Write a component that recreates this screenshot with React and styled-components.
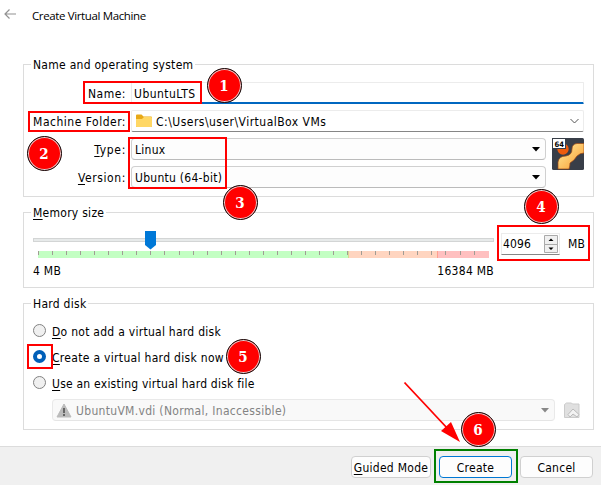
import React from "react";
import styled, { createGlobalStyle } from "styled-components";

const Global = createGlobalStyle`
  * { box-sizing: border-box; }
  body { margin: 0; background: #fff; overflow: hidden; }
`;
const Window = styled.main`
  position: relative; width: 601px; height: 485px; display: flex; flex-direction: column;
  background: #fff; color: #000; font: 12px/16px "DejaVu Sans Condensed", "DejaVu Sans", sans-serif; font-stretch: condensed;
`;
const Label = styled.span`
  display: inline-block; white-space: nowrap; line-height: 16px; padding-top: 1px;
  letter-spacing: ${p => p.$ls ?? 0.27}px;
  &::first-letter { text-decoration: ${p => (p.$key ? "underline" : "none")}; text-underline-offset: 2px; }
`;
const Header = styled.header`
  height: 64px; padding: 6px 0 0 4px; display: flex; align-items: flex-start; gap: 16px; flex: none;
  font: 11.5px/18px "Open Sans", sans-serif; svg { display: block; margin-top: 2px; }
`;
const Title = styled.span`letter-spacing: -0.37px; margin-top: 1px; white-space: nowrap;`;
const Group = styled.section`
  width: 571px; height: ${p => p.$h}px; margin: 0 0 ${p => p.$mb}px 23px; border: 1px solid #dcdcdc;
  display: flex; flex-direction: column; flex: none;
`;
const Legend = styled.h2`
  margin: -9px auto 0 7px; padding: 0 2px; height: 18px; font: inherit; background: #fff; flex: none;
`;
const FormGrid = styled.div`
  display: grid; grid-template-columns: 103px 415px 33px; column-gap: 5px; row-gap: 6px;
  grid-template-rows: repeat(4, 22px); margin: 8px 0 0 -1px;
`;
const FieldLabel = styled.div`text-align: right; padding: 3px 0 0; white-space: nowrap;`;
const Input = styled.div`
  grid-column: 2 / 4; border: 1px solid #ececec; border-bottom: 2px solid #0067c0; border-radius: 1px;
  padding: 2px 0 0 2px; height: 22px;
`;
const FolderBox = styled.div`
  grid-column: 2 / 4; border: 1px solid #ececec; border-bottom-color: #868686; border-radius: 2px;
  display: flex; align-items: center; padding: 0 4px; gap: 4px;
  svg:last-child { margin-left: auto; }
`;
const Combo = styled.div`
  height: 22px; width: ${p => p.$w}px; flex: none; display: flex; align-items: center; justify-content: space-between;
  border: 1px solid ${p => (p.$off ? "#e9e9e9" : "#d0d0d0")}; border-bottom-color: ${p => (p.$off ? "#e5e5e5" : "#bbb")}; border-radius: 4px;
  background: ${p => (p.$off ? "#f9f9f9" : "#fdfdfd")}; color: ${p => (p.$off ? "#838383" : "#000")};
  padding: 0 5px 0 3px;
`;
const Cluster = styled.div`display: flex; align-items: center; gap: 4px;`;
const OsIcon = styled.div`grid-column: 3; grid-row: 3 / 5; padding-left: 1px; svg { display: block; }`;
const MemoryRow = styled.div`display: flex; margin: 8px 0 0 9px;`;
const SliderColumn = styled.div`width: 461px; display: flex; flex-direction: column;`;
const Range = styled.div`display: flex; justify-content: space-between; margin-top: -2px;`;
const Spin = styled.div`
  margin: 3px 0 0 7px; width: 59px; height: 22px; border: 1px solid #ececec; border-bottom-color: #868686;
  display: flex; justify-content: space-between; padding: 1px 0 0 1px; line-height: 20px;
  svg { display: block; }
`;
const Unit = styled.div`margin: 5px 0 0 8px;`;
const RadioList = styled.div`display: flex; flex-direction: column; margin: 5px 0 0 9px;`;
const RadioRow = styled.div`display: flex; align-items: center; gap: 6px; height: 26px;`;
const Radio = styled.i`
  width: 13px; height: 13px; border-radius: 50%; flex: none; margin-top: -1px;
  border: ${p => (p.$on ? "4px solid #005fb8" : "1px solid #828282")}; background: ${p => (p.$on ? "#fff" : "#f0f0f0")};
`;
const DiskRow = styled.div`display: flex; align-items: center; gap: 8px; margin: 3px 0 0 28px;`;
const Footer = styled.footer`
  flex: 1; background: #f0f0f0; border-top: 1px solid #dcdcdc; display: flex; justify-content: flex-end;
  padding: 9px 8px 0 0; gap: 8px;
`;
const Button = styled.button`
  width: ${p => p.$w}px; height: 22px; padding: 0; font: inherit; color: #000; background: #fdfdfd; border-radius: 4px;
  border: 1px solid ${p => (p.$main ? "#0078d4" : "#d0d0d0")};
`;
const Marker = styled.div`
  position: absolute; left: ${p => p.$x}px; top: ${p => p.$y}px; width: ${p => p.$w}px; height: ${p => p.$h}px;
  border: 2px solid ${p => p.$c || "#f00"};
`;
const Badge = styled.div`
  position: absolute; left: ${p => p.$x - 17.5}px; top: ${p => p.$y - 17.5}px; width: 35px; height: 35px;
  border: 1px solid #111; border-radius: 50%; background: #f00; box-shadow: inset 0 0 0 1px #e8d0d0;
  color: #fff; font: bold 15px/34px "DejaVu Serif", serif; font-stretch: condensed; text-align: center;
`;
const Arrow = styled.svg`position: absolute; left: 400px; top: 378px;`;

const Caret = ({ c = "#000" }) => (
  <svg width="8" height="5"><path d="M0 0h8L4 4.5z" fill={c} /></svg>
);
const Text = ({ s, ls, k }) => <Label $ls={ls} $key={k}>{s}</Label>;

const ticks = Array.from({ length: 32 }, (_, i) => 5 + Math.round(i * 14.05));
const Slider = () => (
  <svg width="461" height="34" shapeRendering="crispEdges">
    <rect x="0.5" y="8.5" width="460" height="3" fill="#e7eaea" stroke="#d3d5d5" />
    <rect x="5" y="21" width="310" height="7" fill="#c3ffc3" />
    <rect x="315" y="21" width="89" height="7" fill="#ffd5c0" />
    <rect x="404" y="21" width="52" height="7" fill="#ffc0c0" />
    <rect x="315" y="21" width="1" height="7" fill="#d8d890" />
    <rect x="404" y="21" width="1" height="7" fill="#ffa090" />
    {ticks.map(x => <rect key={x} x={x} y="21" width="1" height="4" fill="#a09c94" />)}
    <path d="M112 1h11v14l-5.500 4.500-5.500-4.500z" fill="#0078d7" shapeRendering="auto" />
  </svg>
);
const badges = [[1, 224, 85.5], [2, 44, 153], [3, 240, 202], [4, 541, 206], [5, 243, 356], [6, 478, 429]];
const markers = [[83, 81, 119, 23], [28, 111, 102, 21], [128, 137, 99, 52], [497, 225, 93, 36], [27, 344, 26, 25]];

export default function App() {
  return (
    <Window>
      <Global />
      <Header>
        <svg width="12" height="12" fill="none" stroke="#929292" strokeWidth="1.2"><path d="M12 6H1M5.500 1.500L1 6l4.500 4.500" /></svg>
        <Title>Create Virtual Machine</Title>
      </Header>
      <Group $h={133} $mb={15}>
        <Legend><Text s="Name and operating system" /></Legend>
        <FormGrid>
          <FieldLabel><Text s="Name:" ls={0.5} /></FieldLabel>
          <Input><Text s="UbuntuLTS" ls={0.47} /></Input>
          <FieldLabel><Text s="Machine Folder:" ls={0.5} /></FieldLabel>
          <FolderBox>
            <svg width="16" height="14"><path d="M0 1.500Q0 .5 1 .5h4.500l2 2H15q1 0 1 1V12q0 1-1 1H1q-1 0-1-1z" fill="#e8a918" /><path d="M0 5h6l2-2h7q1 0 1 1v8q0 1-1 1H1q-1 0-1-1z" fill="#ffd764" /></svg>
            <Text s="C:\Users\user\VirtualBox VMs" ls={0.48} />
            <svg width="9" height="6" fill="none" stroke="#555"><path d="M.5 1l4 4 4-4" /></svg>
          </FolderBox>
          <FieldLabel><Text s="Type:" k ls={0.7} /></FieldLabel>
          <Combo $w={415}><Text s="Linux" /><Caret /></Combo>
          <FieldLabel><Text s="Version:" k ls={0.6} /></FieldLabel>
          <Combo $w={415}><Text s="Ubuntu (64-bit)" /><Caret /></Combo>
          <OsIcon>
            <svg width="32" height="32">
              <defs><linearGradient id="os" x2="1" y2="1"><stop stopColor="#fff0a0" /><stop offset="1" stopColor="#f9982c" /></linearGradient></defs>
              <rect width="32" height="32" rx="1.5" fill="#383e48" />
              <circle cx="11" cy="11" r="5.7" fill="#ed5b0d" />
              <path d="M32 5.500H25Q20 6 20 11 20 17 14 18 7 18 6 24V31H17Q18 28 18 25 22 23 25 18 28 15 32 15z" fill="url(#os)" stroke="#9c4816" strokeWidth=".7" />
              <rect x=".5" y=".5" width="13" height="10" fill="#fff" stroke="#383e48" />
              <text x="2.500" y="8.500" fontFamily="DejaVu Sans" fontWeight="bold" fontSize="7.5" textLength="9.5" lengthAdjust="spacingAndGlyphs">64</text>
            </svg>
          </OsIcon>
        </FormGrid>
      </Group>
      <Group $h={76} $mb={15}>
        <Legend><Text s="Memory size" k /></Legend>
        <MemoryRow>
          <SliderColumn><Slider /><Range><Text s="4 MB" /><Text s="16384 MB" /></Range></SliderColumn>
          <Spin>
            <Text s="4096" ls={0.1} />
            <svg width="15" height="19"><g fill="#f0f0f0" stroke="#aaa"><path d="M.5.5h13v9H.5zM.5 9.500h13v8H.5z" /></g><path d="M4.500 6h5L7 3.500zM4.500 12.500h5L7 15z" /></svg>
          </Spin>
          <Unit><Text s="MB" /></Unit>
        </MemoryRow>
      </Group>
      <Group $h={127} $mb={16}>
        <Legend><Text s="Hard disk" /></Legend>
        <RadioList>
          <RadioRow><Radio /><Text k s="Do not add a virtual hard disk" /></RadioRow>
          <RadioRow><Radio $on /><Text k s="Create a virtual hard disk now" ls={0.31} /></RadioRow>
          <RadioRow><Radio /><Text k s="Use an existing virtual hard disk file" ls={0.23} /></RadioRow>
        </RadioList>
        <DiskRow>
          <Combo $w={503} $off>
            <Cluster>
              <svg width="16" height="15"><path d="M8 1l7 13H1z" fill="#bbb" stroke="#bbb" strokeLinejoin="round" /><path d="M8 5v5M8 11v2" stroke="#666" strokeWidth="2" /></svg>
              <Text s="UbuntuVM.vdi (Normal, Inaccessible)" ls={0.31} />
            </Cluster>
            <Caret c="#888" />
          </Combo>
          <svg width="18" height="17"><path d="M1.500 2.500l2-1.500h5l1 1H16v13.500H1.500z" fill="#e0e0e0" stroke="#cbcbcb" /><path d="M5 12.500l5-5.500 6 5.500-2 2.500-4-3-3 3z" fill="#f3f3f3" stroke="#bbb" /></svg>
        </DiskRow>
      </Group>
      <Footer>
        <Button $w={80}><Text s="Guided Mode" k /></Button>
        <Button $w={73} $main><Text s="Create" /></Button>
        <Button $w={73}><Text s="Cancel" /></Button>
      </Footer>
      {markers.map(([x, y, w, h]) => <Marker key={x} $x={x} $y={y} $w={w} $h={h} />)}
      <Marker $x={434} $y={449} $w={84} $h={34} $c="#008000" />
      <Arrow width="64" height="68"><path d="M4.500 4.500L48 51" stroke="#f00" strokeWidth="1.8" /><path d="M60 64l-19-11 10-9z" fill="#f00" /></Arrow>
      {badges.map(([n, x, y]) => <Badge key={n} $x={x} $y={y}>{n}</Badge>)}
    </Window>
  );
}
